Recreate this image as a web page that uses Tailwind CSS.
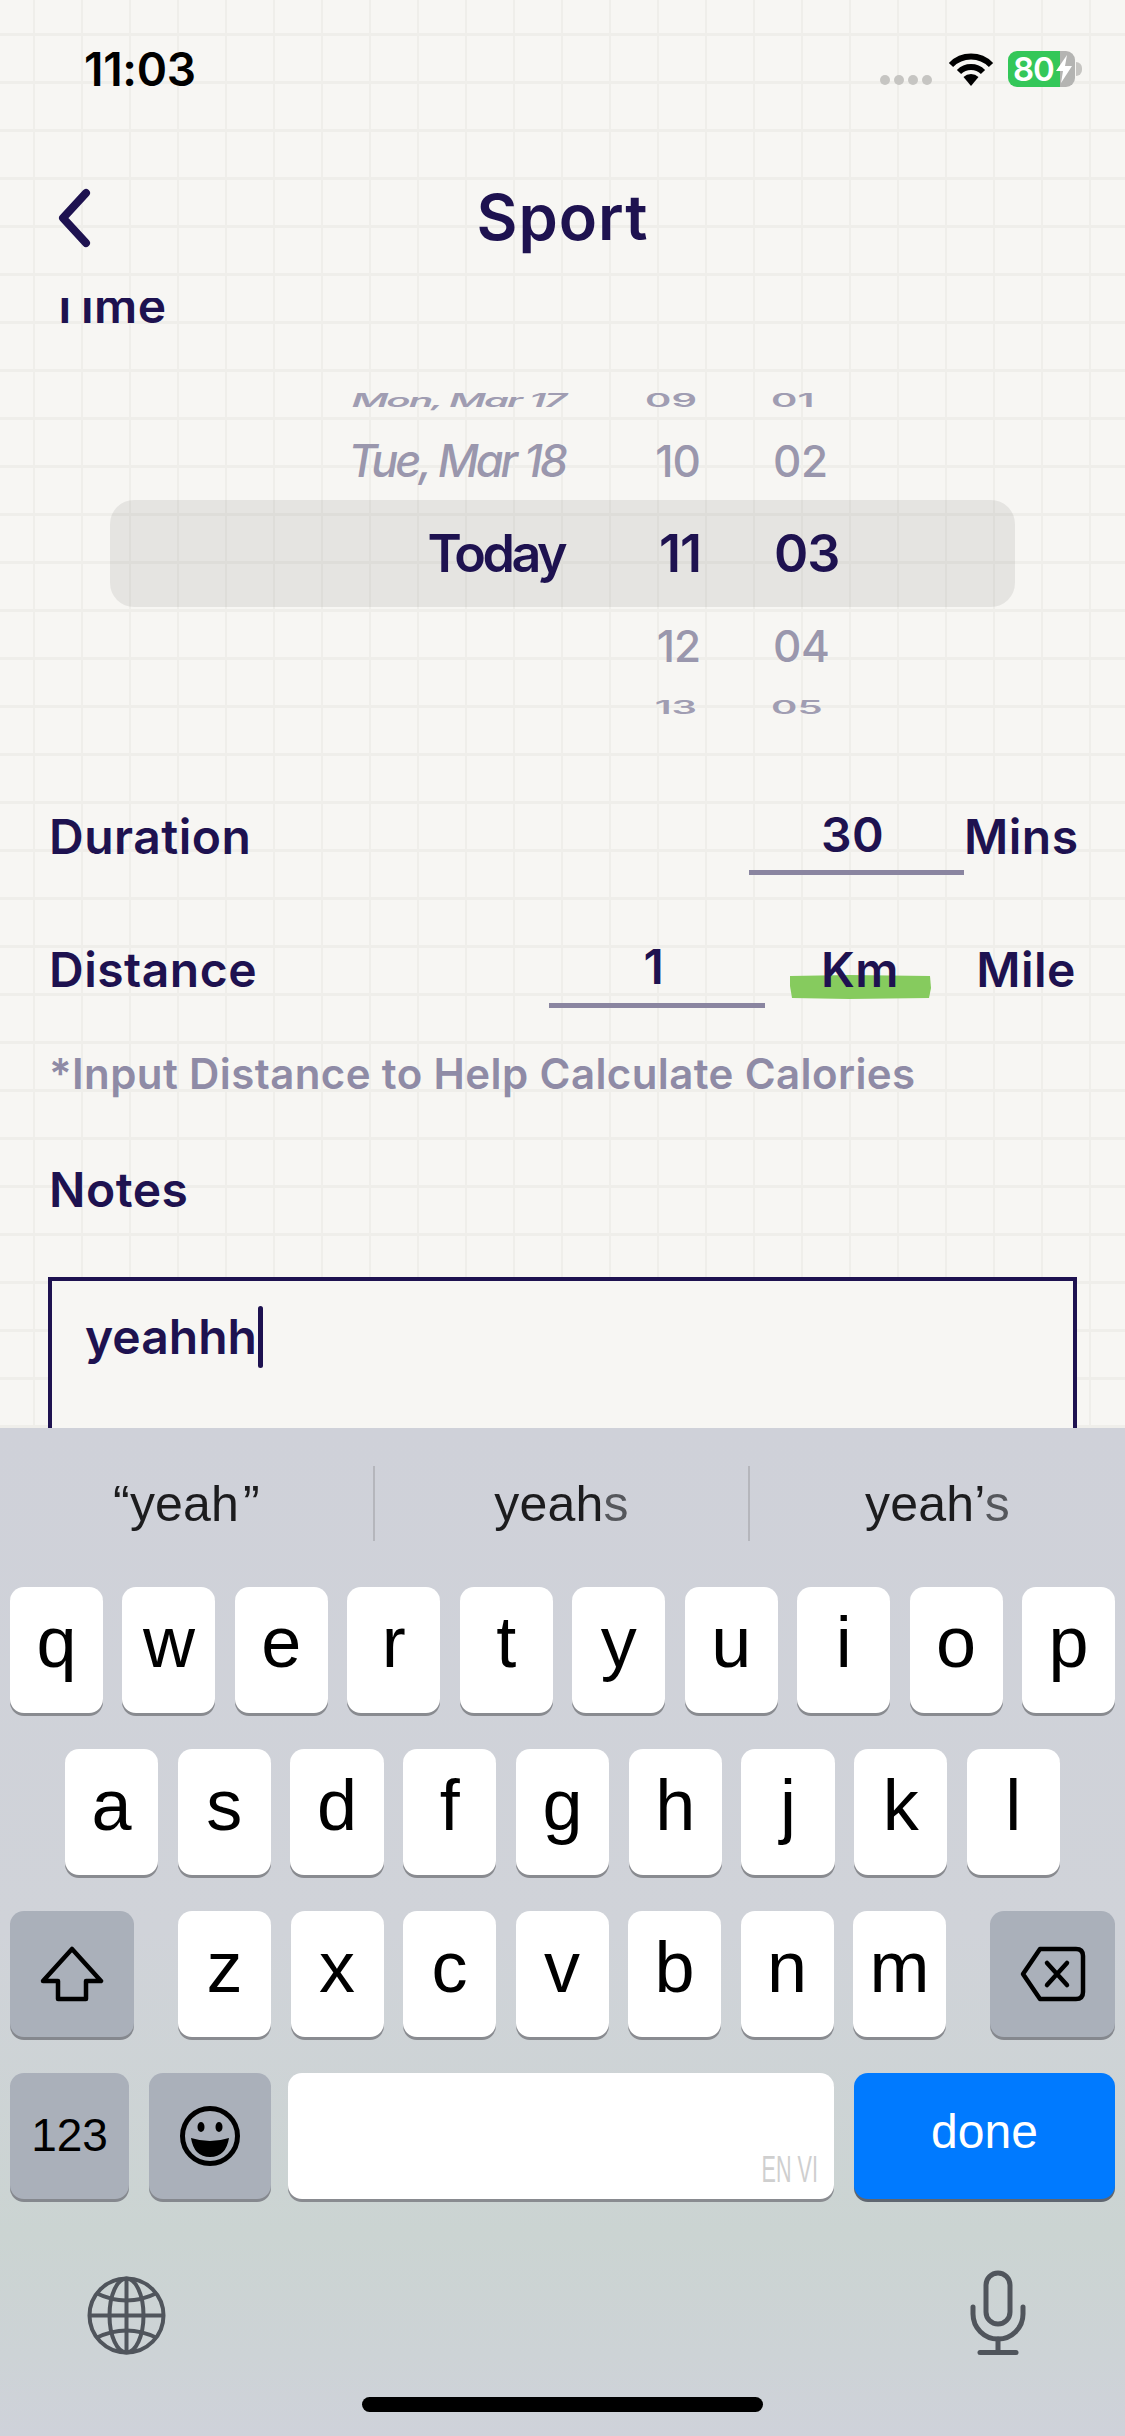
<!DOCTYPE html>
<html lang="en">
<head>
<meta charset="utf-8">
<script src="https://cdn.jsdelivr.net/npm/@tailwindcss/browser@4"></script>
<title>Sport</title>
</head>
<body>
<div class="w-[1125px] h-[2436px] flex flex-col overflow-hidden font-['Inter',sans-serif] text-[#1e1250] bg-[#f7f6f3] bg-[linear-gradient(to_right,#efeeea_2px,transparent_2px),linear-gradient(to_bottom,#efeeea_3px,transparent_3px)] bg-[size:48px_48px] bg-[position:33px_33px]">

  <!-- Status bar -->
  <div class="h-[138px] shrink-0 flex items-center justify-between pl-[84px] pr-[43px] text-black">
    <span class="text-[46px] font-semibold tracking-[-0.3px] leading-none">11:03</span>
    <div class="flex items-center">
      <div class="flex gap-[4px] mt-[22px] mr-[16px]">
        <span class="w-[10px] h-[10px] rounded-full bg-[#c6c5c2]"></span>
        <span class="w-[10px] h-[10px] rounded-full bg-[#c6c5c2]"></span>
        <span class="w-[10px] h-[10px] rounded-full bg-[#c6c5c2]"></span>
        <span class="w-[10px] h-[10px] rounded-full bg-[#c6c5c2]"></span>
      </div>
      <svg class="w-[46px] h-[34px] mr-[14px]" viewBox="0 0 46 34" fill="none" stroke="#000" stroke-width="6" stroke-linecap="butt">
        <path d="M3 13 A28 28 0 0 1 43 13"/>
        <path d="M11 20 A17 17 0 0 1 35 20"/>
        <path d="M23 34 L15.5 25 A11 11 0 0 1 30.5 25 Z" fill="#000" stroke="none"/>
      </svg>
      <div class="relative w-[67px] h-[36px] flex">
        <div class="w-[52px] h-full rounded-l-[9px] bg-[#34c759] text-white text-[33px] font-semibold leading-[36px] pl-[5px] tracking-[-1px] whitespace-nowrap">80</div>
        <div class="w-[15px] h-full rounded-r-[9px] bg-[#b4b4b2]"></div>
        <svg class="absolute left-[47px] top-[4px] w-[18px] h-[28px]" viewBox="0 0 18 28"><path d="M12 0 L1 16 H8 L6 28 L17 11 H10 Z" fill="#fff"/></svg>
      </div>
      <div class="w-[6px] h-[14px] ml-[1px] rounded-r-full bg-[#c6c5c2]"></div>
    </div>
  </div>

  <!-- Nav -->
  <div class="h-[160px] shrink-0 relative flex items-center justify-center">
    <svg class="absolute left-[56px] top-[50px] w-[36px] h-[60px]" viewBox="0 0 36 60" fill="none" stroke="#1e1250" stroke-width="8" stroke-linecap="round" stroke-linejoin="round">
      <path d="M30 5 L7 30 L30 55"/>
    </svg>
    <h1 class="text-[63px] font-[560] tracking-[1px] leading-none -mt-[2px]">Sport</h1>
  </div>

  <!-- Scrolling form -->
  <div class="h-[1130px] shrink-0 overflow-hidden flex flex-col">
    <div class="h-[50px] -mt-[17px] pl-[49px] text-[48px] font-[560] tracking-[0.4px] leading-[50px] shrink-0">Time</div>

    <!-- Picker -->
    <div class="relative mt-[48px] shrink-0">
      <div class="absolute left-[110px] top-[121px] w-[905px] h-[107px] rounded-[24px] bg-black/[0.07]"></div>
      <div class="relative flex h-[44px] items-center text-[#a09db2] font-semibold">
        <div class="w-[565px] text-right text-[40px] tracking-[-2px] italic whitespace-nowrap scale-y-[0.45]">Mon, Mar 17</div>
        <div class="w-[132px] text-right text-[40px] scale-y-[0.45]">09</div>
        <div class="ml-[74px] text-[40px] scale-y-[0.45]">01</div>
      </div>
      <div class="relative flex h-[76px] items-center text-[#9a97ad] font-medium">
        <div class="w-[565px] text-right text-[45px] tracking-[-3px] italic whitespace-nowrap">Tue, Mar 18</div>
        <div class="w-[135px] text-right text-[44px] tracking-[-1px]">10</div>
        <div class="ml-[73px] text-[44px] tracking-[-0.5px]">02</div>
      </div>
      <div class="relative flex h-[104px] pt-[5px] items-center font-semibold">
        <div class="w-[564px] text-right text-[52px] tracking-[-3.5px]">Today</div>
        <div class="w-[137px] text-right text-[52px] tracking-[-1px]">11</div>
        <div class="ml-[73px] text-[52px] tracking-[-1px]">03</div>
      </div>
      <div class="relative flex h-[86px] items-center text-[#9a97ad] font-medium">
        <div class="w-[565px]"></div>
        <div class="w-[135px] text-right text-[44px] tracking-[-1px]">12</div>
        <div class="ml-[73px] text-[44px] tracking-[-0.5px]">04</div>
      </div>
      <div class="relative flex h-[38px] items-center text-[#a09db2] font-semibold">
        <div class="w-[565px]"></div>
        <div class="w-[132px] text-right text-[40px] scale-y-[0.45]">13</div>
        <div class="ml-[74px] text-[40px] scale-y-[0.45]">05</div>
      </div>
    </div>

    <!-- Duration -->
    <div class="mt-[74px] h-[74px] shrink-0 pl-[49px] pr-[49px] flex text-[48px] font-[560] tracking-[0.5px]">
      <span class="leading-[72px]">Duration</span>
      <div class="ml-auto w-[215px] h-[74px] border-b-[5px] border-[#8a85a0] text-center leading-[68px] pr-[8px]">30</div>
      <span class="w-[112px] text-right leading-[72px]">Mins</span>
    </div>

    <!-- Distance -->
    <div class="mt-[59px] h-[74px] shrink-0 pl-[49px] pr-[49px] flex text-[48px] font-[560] tracking-[0.5px]">
      <span class="leading-[72px]">Distance</span>
      <div class="ml-auto w-[216px] h-[74px] border-b-[5px] border-[#8a85a0] text-center leading-[66px] pr-[6px]">1</div>
      <div class="relative ml-[24px] w-[142px] text-center leading-[72px]">
        <svg class="absolute left-0 top-[40px] w-[142px] h-[25px]" viewBox="0 0 142 25" preserveAspectRatio="none"><path d="M1 2 L60 1 L141 2 L142 14 L140 24 L60 25 L3 24 L1 12 Z" fill="#86cb5e"/></svg>
        <span class="relative">Km</span>
      </div>
      <span class="w-[145px] text-right leading-[72px]">Mile</span>
    </div>

    <div class="mt-[41px] h-[50px] shrink-0 pl-[49px] text-[42px] font-[560] leading-[50px] tracking-[0.4px] text-[#8f8ba6] whitespace-nowrap">*Input Distance to Help Calculate Calories</div>

    <div class="mt-[66px] h-[50px] shrink-0 pl-[49px] text-[48px] font-[560] leading-[50px] tracking-[0.5px]">Notes</div>

    <div class="mt-[62px] mx-[48px] h-[300px] shrink-0 border-[4px] border-[#1e1250] bg-[#f7f6f3] pl-[33px] pt-[25px] text-[48px] font-[560] leading-[62px] whitespace-nowrap">yeahhh<span class="inline-block w-[5px] h-[62px] ml-[1px] align-top rounded-full bg-[#1e1250]"></span></div>
  </div>

  <!-- Keyboard -->
  <div class="h-[1008px] shrink-0 flex flex-col font-['Liberation_Sans',sans-serif] text-black bg-[linear-gradient(to_bottom,#cfd1d9_0%,#d0d3d9_50%,#cbd4d2_80%,#cdd3d6_92%,#cfd2da_100%)]">
    <div class="h-[159px] shrink-0 flex items-center pb-[8px] text-[50px] tracking-[0.2px] text-[#1c1c1e]">
      <div class="w-[373px] h-[75px] flex items-center justify-center leading-none"><span>“yeah<span class="relative pl-[4px]">”</span></span></div>
      <div class="w-[2px] h-[75px] bg-[#b5b6bc]"></div>
      <div class="w-[373px] h-[75px] flex items-center justify-center leading-none"><span>yeah<span class="text-[#55575c]">s</span></span></div>
      <div class="w-[2px] h-[75px] bg-[#b5b6bc]"></div>
      <div class="flex-1 h-[75px] flex items-center justify-center leading-none"><span>yeah’<span class="text-[#55575c]">s</span></span></div>
    </div>

    <div class="h-[126px] shrink-0 px-[10px] flex gap-[19.5px] text-[72px] leading-[110px] text-center">
      <div class="flex-1 bg-white rounded-[14px] shadow-[0_3px_0_#898b90]">q</div>
      <div class="flex-1 bg-white rounded-[14px] shadow-[0_3px_0_#898b90]">w</div>
      <div class="flex-1 bg-white rounded-[14px] shadow-[0_3px_0_#898b90]">e</div>
      <div class="flex-1 bg-white rounded-[14px] shadow-[0_3px_0_#898b90]">r</div>
      <div class="flex-1 bg-white rounded-[14px] shadow-[0_3px_0_#898b90]">t</div>
      <div class="flex-1 bg-white rounded-[14px] shadow-[0_3px_0_#898b90]">y</div>
      <div class="flex-1 bg-white rounded-[14px] shadow-[0_3px_0_#898b90]">u</div>
      <div class="flex-1 bg-white rounded-[14px] shadow-[0_3px_0_#898b90]">i</div>
      <div class="flex-1 bg-white rounded-[14px] shadow-[0_3px_0_#898b90]">o</div>
      <div class="flex-1 bg-white rounded-[14px] shadow-[0_3px_0_#898b90]">p</div>
    </div>

    <div class="h-[126px] mt-[36px] shrink-0 px-[65px] flex gap-[19.5px] text-[72px] leading-[112px] text-center">
      <div class="flex-1 bg-white rounded-[14px] shadow-[0_3px_0_#898b90]">a</div>
      <div class="flex-1 bg-white rounded-[14px] shadow-[0_3px_0_#898b90]">s</div>
      <div class="flex-1 bg-white rounded-[14px] shadow-[0_3px_0_#898b90]">d</div>
      <div class="flex-1 bg-white rounded-[14px] shadow-[0_3px_0_#898b90]">f</div>
      <div class="flex-1 bg-white rounded-[14px] shadow-[0_3px_0_#898b90]">g</div>
      <div class="flex-1 bg-white rounded-[14px] shadow-[0_3px_0_#898b90]">h</div>
      <div class="flex-1 bg-white rounded-[14px] shadow-[0_3px_0_#898b90]">j</div>
      <div class="flex-1 bg-white rounded-[14px] shadow-[0_3px_0_#898b90]">k</div>
      <div class="flex-1 bg-white rounded-[14px] shadow-[0_3px_0_#898b90]">l</div>
    </div>

    <div class="h-[126px] mt-[36px] shrink-0 px-[10px] flex justify-between text-[72px] leading-[112px] text-center">
      <div class="w-[124px] flex items-center justify-center bg-[#aab0ba] rounded-[14px] shadow-[0_3px_0_#85888e]">
        <svg class="w-[64px] h-[56px]" viewBox="0 0 64 56" fill="none" stroke="#000" stroke-width="4.5" stroke-linejoin="round"><path d="M32 3 L61 35 H46 V53 H18 V35 H3 Z"/></svg>
      </div>
      <div class="flex gap-[19.5px]">
        <div class="w-[93px] bg-white rounded-[14px] shadow-[0_3px_0_#898b90]">z</div>
        <div class="w-[93px] bg-white rounded-[14px] shadow-[0_3px_0_#898b90]">x</div>
        <div class="w-[93px] bg-white rounded-[14px] shadow-[0_3px_0_#898b90]">c</div>
        <div class="w-[93px] bg-white rounded-[14px] shadow-[0_3px_0_#898b90]">v</div>
        <div class="w-[93px] bg-white rounded-[14px] shadow-[0_3px_0_#898b90]">b</div>
        <div class="w-[93px] bg-white rounded-[14px] shadow-[0_3px_0_#898b90]">n</div>
        <div class="w-[93px] bg-white rounded-[14px] shadow-[0_3px_0_#898b90]">m</div>
      </div>
      <div class="w-[125px] flex items-center justify-center bg-[#aab0ba] rounded-[14px] shadow-[0_3px_0_#85888e]">
        <svg class="w-[66px] h-[56px]" viewBox="0 0 66 56" fill="none" stroke="#000" stroke-width="4.5" stroke-linecap="round" stroke-linejoin="round"><path d="M20 3 H56 Q63 3 63 10 V46 Q63 53 56 53 H20 L3 28 Z"/><path d="M27 17 L47 39 M47 17 L27 39"/></svg>
      </div>
    </div>

    <div class="h-[126px] mt-[36px] shrink-0 px-[10px] flex">
      <div class="w-[119px] flex items-center justify-center bg-[#aab0ba] rounded-[14px] shadow-[0_3px_0_#85888e] text-[46px] pb-[2px]">123</div>
      <div class="w-[122px] ml-[20px] flex items-center justify-center bg-[#aab0ba] rounded-[14px] shadow-[0_3px_0_#85888e]">
        <svg class="w-[62px] h-[62px]" viewBox="0 0 62 62" fill="none"><circle cx="31" cy="31" r="27.5" stroke="#000" stroke-width="5"/><ellipse cx="22" cy="22" rx="3.5" ry="5" fill="#000"/><ellipse cx="40" cy="22" rx="3.5" ry="5" fill="#000"/><path d="M12 33 Q31 39 50 33 Q47 52 31 52 Q15 52 12 33 Z" fill="#000"/></svg>
      </div>
      <div class="w-[546px] ml-[17px] relative bg-white rounded-[14px] shadow-[0_3px_0_#898b90]">
        <span class="absolute right-[16px] bottom-[11px] text-[36px] leading-none text-[#cfcfcf] whitespace-nowrap scale-x-[0.6] origin-right">EN VI</span>
      </div>
      <div class="w-[261px] ml-[20px] flex items-center justify-center bg-[#007aff] rounded-[14px] shadow-[0_3px_0_#5f6670] text-white text-[48px] pb-[8px]">done</div>
    </div>

    <div class="mt-[71px] h-[85px] shrink-0 pl-[87px] pr-[99px] flex items-end justify-between">
      <svg class="w-[79px] h-[79px]" viewBox="0 0 79 79" fill="none" stroke="#50555c" stroke-width="4">
        <circle cx="39.5" cy="39.5" r="37"/>
        <ellipse cx="39.5" cy="39.5" rx="17" ry="37"/>
        <path d="M39.5 2.5 V76.5 M2.5 39.5 H76.5"/>
        <path d="M9 17 Q39.5 32 70 17 M9 62 Q39.5 47 70 62"/>
      </svg>
      <svg class="w-[56px] h-[85px]" viewBox="0 0 56 85" fill="none" stroke="#50555c" stroke-width="5" stroke-linecap="round">
        <rect x="16" y="3" width="24" height="51" rx="12"/>
        <path d="M3 37 V44 A25 25 0 0 0 53 44 V37"/>
        <path d="M28 69 V81"/>
        <path d="M10 82.5 H46" stroke-width="5"/>
      </svg>
    </div>

    <div class="mt-[42px] mx-auto w-[401px] h-[15px] shrink-0 rounded-full bg-black"></div>
  </div>
</div>
</body>
</html>
